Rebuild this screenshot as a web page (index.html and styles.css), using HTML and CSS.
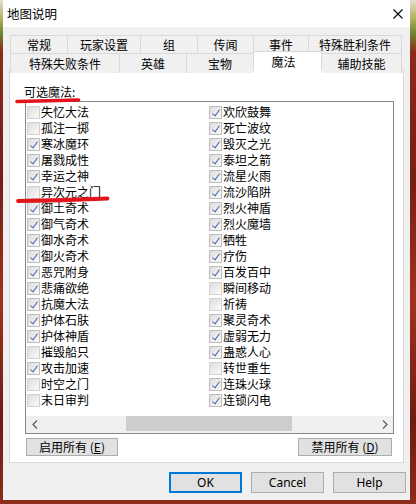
FILE: index.html
```html
<!DOCTYPE html>
<html lang="zh-CN">
<head>
    <meta charset="UTF-8">
    <title>地图说明</title>
    <link rel="stylesheet" href="styles.css">
</head>
<body>
    <div class="dialog">
        <div class="titlebar">
            <span class="title">地图说明</span>
            <svg class="close" width="10" height="10" viewBox="0 0 10 10">
                <path d="M0.5 0.5 L9.5 9.5 M9.5 0.5 L0.5 9.5" stroke="#000" stroke-width="1.1" fill="none"/>
            </svg>
        </div>

        <div class="content">
            <!-- 两行标签页 -->
            <div class="tabs">
                <div class="tab-row row-top">
                    <div class="tab">常规</div>
                    <div class="tab">玩家设置</div>
                    <div class="tab">组</div>
                    <div class="tab">传闻</div>
                    <div class="tab">事件</div>
                    <div class="tab">特殊胜利条件</div>
                </div>
                <div class="tab-row row-bottom">
                    <div class="tab">特殊失败条件</div>
                    <div class="tab">英雄</div>
                    <div class="tab">宝物</div>
                    <div class="tab active">魔法</div>
                    <div class="tab">辅助技能</div>
                </div>
            </div>

            <div class="panel">
                <div class="label">可选魔法:</div>
                <div class="listbox">
                    <div class="list">
                        <div class="item"><span class="chk"></span>失忆大法</div>
                        <div class="item"><span class="chk"></span>孤注一掷</div>
                        <div class="item"><span class="chk on"></span>寒冰魔环</div>
                        <div class="item"><span class="chk on"></span>屠戮成性</div>
                        <div class="item"><span class="chk on"></span>幸运之神</div>
                        <div class="item"><span class="chk"></span>异次元之门</div>
                        <div class="item"><span class="chk on"></span>御土奇术</div>
                        <div class="item"><span class="chk on"></span>御气奇术</div>
                        <div class="item"><span class="chk on"></span>御水奇术</div>
                        <div class="item"><span class="chk on"></span>御火奇术</div>
                        <div class="item"><span class="chk on"></span>恶咒附身</div>
                        <div class="item"><span class="chk on"></span>悲痛欲绝</div>
                        <div class="item"><span class="chk on"></span>抗魔大法</div>
                        <div class="item"><span class="chk on"></span>护体石肤</div>
                        <div class="item"><span class="chk on"></span>护体神盾</div>
                        <div class="item"><span class="chk"></span>摧毁船只</div>
                        <div class="item"><span class="chk on"></span>攻击加速</div>
                        <div class="item"><span class="chk"></span>时空之门</div>
                        <div class="item"><span class="chk"></span>末日审判</div>

                        <div class="item"><span class="chk on"></span>欢欣鼓舞</div>
                        <div class="item"><span class="chk on"></span>死亡波纹</div>
                        <div class="item"><span class="chk on"></span>毁灭之光</div>
                        <div class="item"><span class="chk on"></span>泰坦之箭</div>
                        <div class="item"><span class="chk on"></span>流星火雨</div>
                        <div class="item"><span class="chk on"></span>流沙陷阱</div>
                        <div class="item"><span class="chk on"></span>烈火神盾</div>
                        <div class="item"><span class="chk on"></span>烈火魔墙</div>
                        <div class="item"><span class="chk on"></span>牺牲</div>
                        <div class="item"><span class="chk on"></span>疗伤</div>
                        <div class="item"><span class="chk on"></span>百发百中</div>
                        <div class="item"><span class="chk"></span>瞬间移动</div>
                        <div class="item"><span class="chk"></span>祈祷</div>
                        <div class="item"><span class="chk on"></span>聚灵奇术</div>
                        <div class="item"><span class="chk on"></span>虚弱无力</div>
                        <div class="item"><span class="chk on"></span>蛊惑人心</div>
                        <div class="item"><span class="chk"></span>转世重生</div>
                        <div class="item"><span class="chk on"></span>连珠火球</div>
                        <div class="item"><span class="chk on"></span>连锁闪电</div>
                    </div>
                    <div class="hscroll">
                        <div class="arrow">
                            <svg width="6" height="9" viewBox="0 0 6 9"><path d="M5 0.5 L1 4.5 L5 8.5" stroke="#606060" stroke-width="1.3" fill="none"/></svg>
                        </div>
                        <div class="track"><div class="thumb"></div></div>
                        <div class="arrow">
                            <svg width="6" height="9" viewBox="0 0 6 9"><path d="M1 0.5 L5 4.5 L1 8.5" stroke="#606060" stroke-width="1.3" fill="none"/></svg>
                        </div>
                    </div>
                </div>
                <div class="panel-buttons">
                    <button class="btn btn-enable">启用所有 (<u>E</u>)</button>
                    <button class="btn btn-disable">禁用所有 (<u>D</u>)</button>
                </div>
            </div>

            <div class="dialog-buttons">
                <button class="btn btn-main default">OK</button>
                <button class="btn btn-main">Cancel</button>
                <button class="btn btn-main">Help</button>
            </div>
        </div>

        <!-- 红色标注线 -->
        <svg class="marks" width="407" height="500" viewBox="0 0 407 500">
            <path d="M14 101.5 Q45 100.5 75.5 100" stroke="#e3141b" stroke-width="3.6" stroke-linecap="round" fill="none"/>
            <path d="M15 201 Q60 200.5 104.5 198.5" stroke="#e3141b" stroke-width="3.8" stroke-linecap="round" fill="none"/>
        </svg>
    </div>
</body>
</html>
```

FILE: styles.css
```css
* {
    margin: 0;
    padding: 0;
    box-sizing: border-box;
}

body {
    width: 416px;
    height: 504px;
    overflow: hidden;
    font-family: "Noto Sans CJK SC", sans-serif;
    font-size: 12px;
    color: #000;
    background: linear-gradient(to bottom, #e4e0d4 0, #b8b060 18px, #6e8a32 32px, #8c2a1a 52px, #771e14 180px, #a0321f 300px, #6e1c12 420px, #8e2b1b 504px);
}

.dialog {
    position: relative;
    margin-left: 3px;
    width: 407px;
    height: 500px;
    background: #f0f0f0;
}

.titlebar {
    height: 27px;
    background: #fff;
    display: flex;
    align-items: center;
    justify-content: space-between;
    padding: 0 7px 0 4px;
}

.title {
    font-size: 12.5px;
    line-height: 14px;
}

.content {
    padding: 8px 6px 0 6px;
}

/* 标签页 */
.tabs {
    margin: 0 2px 0 1px;
}

.tab-row {
    display: grid;
}

.row-top {
    grid-template-columns: 57px 73px 57px 56px 55px 94px;
    height: 18px;
}

.row-bottom {
    grid-template-columns: 109px 67px 67px 69px 80px;
    height: 17px;
}

.tab {
    border: 1px solid #d9d9d9;
    border-right: none;
    border-bottom: none;
    background: #f0f0f0;
    text-align: center;
    line-height: 17px;
    white-space: nowrap;
}

.row-bottom .tab {
    line-height: 19px;
}

.tab:last-child {
    border-right: 1px solid #d9d9d9;
}

.tab.active {
    position: relative;
    z-index: 1;
    margin-top: -2px;
    height: 20px;
    background: #fff;
    border-right: 1px solid #d9d9d9;
    line-height: 20px;
    padding-right: 8px;
}

.tab.active + .tab {
    border-left: none;
}

.panel {
    height: 393px;
    background: #fff;
    border: 1px solid #d9d9d9;
    padding: 14px 10px 0 14px;
}

.label {
    height: 14px;
    line-height: 14px;
}

.listbox {
    margin: 2px 0 0 1px;
    width: 369px;
    height: 333px;
    border: 1px solid #828790;
    display: flex;
    flex-direction: column;
}

.list {
    flex: 1;
    display: grid;
    grid-auto-flow: column;
    grid-template-rows: repeat(19, 16px);
    grid-template-columns: 182px 182px;
    padding: 2px 0 0 1px;
}

.item {
    display: flex;
    align-items: center;
    line-height: 16px;
    white-space: nowrap;
}

.chk {
    position: relative;
    width: 13px;
    height: 13px;
    margin-right: 1px;
    border: 1px solid #d2d2d2;
    background: linear-gradient(135deg, #dcdcdc, #f2f2f2 70%, #fbfbfb);
}

.chk.on {
    border-color: #bdbdbd;
}

.chk.on::after {
    content: "";
    position: absolute;
    left: 4px;
    top: 1.5px;
    width: 3px;
    height: 7px;
    border: solid #5670b8;
    border-width: 0 1.6px 1.6px 0;
    transform: rotate(36deg);
}

.hscroll {
    height: 17px;
    display: flex;
    background: #f0f0f0;
}

.arrow {
    width: 17px;
    display: flex;
    align-items: center;
    justify-content: center;
}

.track {
    flex: 1;
}

.thumb {
    margin-left: 83px;
    width: 166px;
    height: 15px;
    background: #cdcdcd;
}

.panel-buttons {
    display: flex;
    justify-content: space-between;
    margin: 4px 1px 0 2px;
}

.btn {
    height: 18px;
    background: #e1e1e1;
    border: 1px solid #adadad;
    font-family: "Noto Sans CJK SC", sans-serif;
    font-size: 12px;
    line-height: 16px;
    color: #000;
}

.btn-enable {
    width: 92px;
}

.btn-disable {
    width: 94px;
}

.dialog-buttons {
    display: flex;
    justify-content: flex-end;
    gap: 9px;
    margin: 9px -2px 0 0;
}

.btn-main {
    width: 73px;
    height: 21px;
    font-family: "Noto Sans", sans-serif;
    line-height: 18px;
}

.btn-main.default {
    border: 2px solid #0078d7;
}

.marks {
    position: absolute;
    left: 0;
    top: 0;
    pointer-events: none;
}
```
